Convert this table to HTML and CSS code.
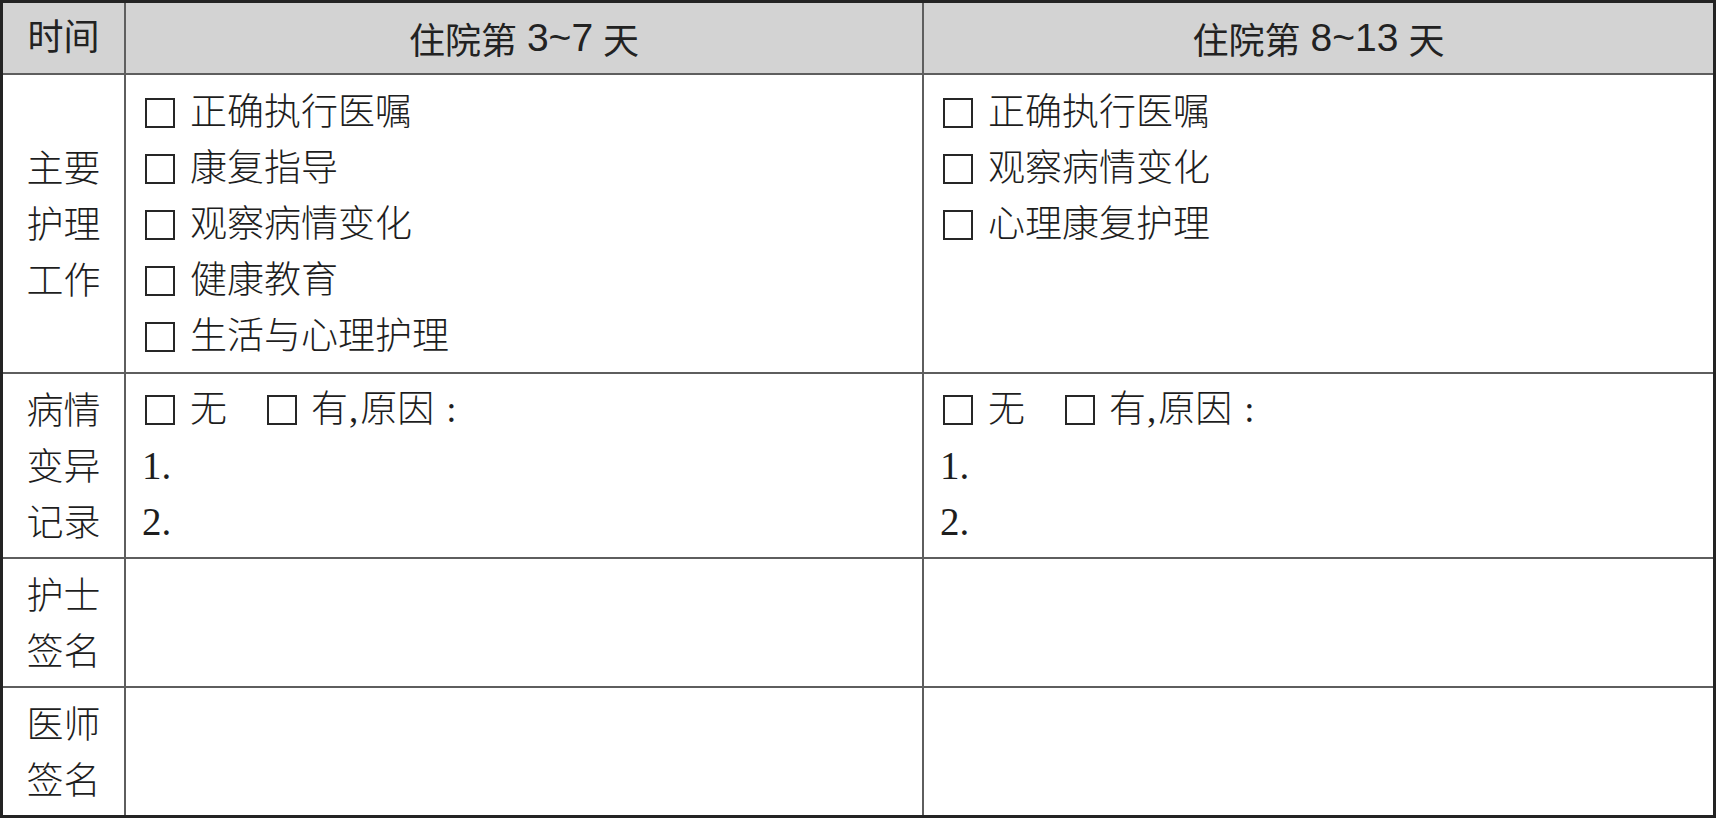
FILE: index.html
```html
<!DOCTYPE html>
<html lang="zh-CN">
<head>
<meta charset="utf-8">
<title>护理记录表</title>
<link rel="stylesheet" href="styles.css">
</head>
<body>
<div class="sheet">
  <div class="head label">时间</div>
  <div class="head">住院第 <span class="num">3~7</span> 天</div>
  <div class="head">住院第 <span class="num">8~13</span> 天</div>

  <div class="label">主要<br>护理<br>工作</div>
  <div class="cell cell-list">
    <div class="item"><span class="box"></span>正确执行医嘱</div>
    <div class="item"><span class="box"></span>康复指导</div>
    <div class="item"><span class="box"></span>观察病情变化</div>
    <div class="item"><span class="box"></span>健康教育</div>
    <div class="item"><span class="box"></span>生活与心理护理</div>
  </div>
  <div class="cell cell-list">
    <div class="item"><span class="box"></span>正确执行医嘱</div>
    <div class="item"><span class="box"></span>观察病情变化</div>
    <div class="item"><span class="box"></span>心理康复护理</div>
  </div>

  <div class="label">病情<br>变异<br>记录</div>
  <div class="cell">
    <div class="item"><span class="box"></span>无<span class="box second"></span>有<span class="comma">,</span>原因<span class="colon">:</span></div>
    <div class="item num-item">1.</div>
    <div class="item num-item">2.</div>
  </div>
  <div class="cell">
    <div class="item"><span class="box"></span>无<span class="box second"></span>有<span class="comma">,</span>原因<span class="colon">:</span></div>
    <div class="item num-item">1.</div>
    <div class="item num-item">2.</div>
  </div>

  <div class="label">护士<br>签名</div>
  <div class="cell"></div>
  <div class="cell"></div>

  <div class="label">医师<br>签名</div>
  <div class="cell"></div>
  <div class="cell"></div>
</div>
</body>
</html>
```

FILE: styles.css
```css
html, body {
  margin: 0;
  padding: 0;
  background: #ffffff;
}

.sheet {
  box-sizing: border-box;
  width: 1716px;
  height: 818px;
  border: 3px solid #232323;
  background: #5e5e5e;
  display: grid;
  grid-template-columns: 121px 796px 1fr;
  grid-template-rows: 70px 297px 183px 127px 127px;
  gap: 2px;
  color: #1e1e1e;
  font-family: "Liberation Serif", "Noto Sans CJK SC", serif;
  font-size: 37px;
  font-weight: 300;
}

.sheet > div {
  background: #ffffff;
}

.label {
  box-sizing: border-box;
  display: flex;
  align-items: center;
  justify-content: center;
  text-align: center;
  line-height: 56px;
  padding-top: 4px;
}

.head {
  display: flex;
  align-items: center;
  justify-content: center;
  background: #d3d3d3 !important;
  font-family: "Liberation Sans", "Noto Sans CJK SC", sans-serif;
  font-size: 36px;
  font-weight: 400;
  color: #222222;
  white-space: pre;
  padding-top: 0;
}

.head .num {
  font-size: 39px;
}

.cell {
  padding: 8px 0 0 19px;
  line-height: 56px;
}

.cell-list {
  padding-top: 10px;
}

.item {
  display: flex;
  align-items: center;
  height: 56px;
}

.box {
  box-sizing: border-box;
  width: 30px;
  height: 30px;
  border: 2px solid #262626;
  margin-right: 15px;
  flex: none;
}

.box.second {
  margin-left: 40px;
  margin-right: 14px;
}

.comma {
  margin: 0 2px 0 1px;
}

.colon {
  margin-left: 12px;
}

.num-item {
  font-size: 39px;
  margin-left: -3px;
}
```
